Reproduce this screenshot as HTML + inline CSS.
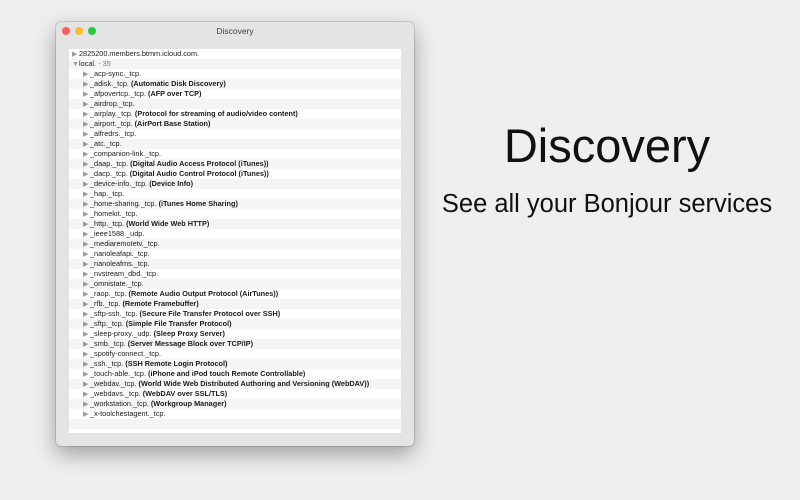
<!DOCTYPE html>
<html><head><meta charset="utf-8"><style>
body{margin:0;width:800px;height:500px;background:#efefef;position:relative;overflow:hidden;font-family:"Liberation Sans",sans-serif}
.win{position:absolute;left:56px;top:22px;width:358px;height:424px;background:#e4e4e4;border-radius:5px;box-shadow:0 8px 22px rgba(0,0,0,.35),0 0 0 1px rgba(0,0,0,.12)}
.tb{height:18px;text-align:center;font-size:8.5px;line-height:18px;color:#444}
.dot{position:absolute;top:5px;width:8px;height:8px;border-radius:50%}
.list{position:absolute;left:13px;top:27px;width:332px;height:384px;background:#fff;overflow:hidden}
.r{height:10px;line-height:10px;font-size:7.3px;color:#1a1a1a;white-space:nowrap}
.r:nth-child(even){background:#f5f5f5}
.r b{font-weight:bold}
.t{color:#999;font-size:7px;display:inline-block;width:7px}
.i1{padding-left:3px}.i2{padding-left:14px}
h1{position:absolute;left:440px;width:334px;top:118px;margin:0;text-align:center;font-weight:300;font-size:47px;color:#111}
h2{position:absolute;left:425px;width:364px;top:190px;margin:0;text-align:center;font-weight:normal;font-size:25.5px;color:#111}
</style></head><body>
<div class="win">
<div class="dot" style="left:6px;background:#fc5f57"></div>
<div class="dot" style="left:19px;background:#fdbc2e"></div>
<div class="dot" style="left:32px;background:#2ac940"></div>
<div class="tb">Discovery</div>
<div class="list">
<div class="r i1"><span class="t">▶</span>2825200.members.btmm.icloud.com.</div>
<div class="r i1"><span class="t">▼</span>local. <span style="color:#777">- 35</span></div>
<div class="r i2"><span class="t">▶</span>_acp-sync._tcp.</div>
<div class="r i2"><span class="t">▶</span>_adisk._tcp. <b>(Automatic Disk Discovery)</b></div>
<div class="r i2"><span class="t">▶</span>_afpovertcp._tcp. <b>(AFP over TCP)</b></div>
<div class="r i2"><span class="t">▶</span>_airdrop._tcp.</div>
<div class="r i2"><span class="t">▶</span>_airplay._tcp. <b>(Protocol for streaming of audio/video content)</b></div>
<div class="r i2"><span class="t">▶</span>_airport._tcp. <b>(AirPort Base Station)</b></div>
<div class="r i2"><span class="t">▶</span>_alfredrs._tcp.</div>
<div class="r i2"><span class="t">▶</span>_atc._tcp.</div>
<div class="r i2"><span class="t">▶</span>_companion-link._tcp.</div>
<div class="r i2"><span class="t">▶</span>_daap._tcp. <b>(Digital Audio Access Protocol (iTunes))</b></div>
<div class="r i2"><span class="t">▶</span>_dacp._tcp. <b>(Digital Audio Control Protocol (iTunes))</b></div>
<div class="r i2"><span class="t">▶</span>_device-info._tcp. <b>(Device Info)</b></div>
<div class="r i2"><span class="t">▶</span>_hap._tcp.</div>
<div class="r i2"><span class="t">▶</span>_home-sharing._tcp. <b>(iTunes Home Sharing)</b></div>
<div class="r i2"><span class="t">▶</span>_homekit._tcp.</div>
<div class="r i2"><span class="t">▶</span>_http._tcp. <b>(World Wide Web HTTP)</b></div>
<div class="r i2"><span class="t">▶</span>_ieee1588._udp.</div>
<div class="r i2"><span class="t">▶</span>_mediaremotetv._tcp.</div>
<div class="r i2"><span class="t">▶</span>_nanoleafapi._tcp.</div>
<div class="r i2"><span class="t">▶</span>_nanoleafms._tcp.</div>
<div class="r i2"><span class="t">▶</span>_nvstream_dbd._tcp.</div>
<div class="r i2"><span class="t">▶</span>_omnistate._tcp.</div>
<div class="r i2"><span class="t">▶</span>_raop._tcp. <b>(Remote Audio Output Protocol (AirTunes))</b></div>
<div class="r i2"><span class="t">▶</span>_rfb._tcp. <b>(Remote Framebuffer)</b></div>
<div class="r i2"><span class="t">▶</span>_sftp-ssh._tcp. <b>(Secure File Transfer Protocol over SSH)</b></div>
<div class="r i2"><span class="t">▶</span>_sftp._tcp. <b>(Simple File Transfer Protocol)</b></div>
<div class="r i2"><span class="t">▶</span>_sleep-proxy._udp. <b>(Sleep Proxy Server)</b></div>
<div class="r i2"><span class="t">▶</span>_smb._tcp. <b>(Server Message Block over TCP/IP)</b></div>
<div class="r i2"><span class="t">▶</span>_spotify-connect._tcp.</div>
<div class="r i2"><span class="t">▶</span>_ssh._tcp. <b>(SSH Remote Login Protocol)</b></div>
<div class="r i2"><span class="t">▶</span>_touch-able._tcp. <b>(iPhone and iPod touch Remote Controllable)</b></div>
<div class="r i2"><span class="t">▶</span>_webdav._tcp. <b>(World Wide Web Distributed Authoring and Versioning (WebDAV))</b></div>
<div class="r i2"><span class="t">▶</span>_webdavs._tcp. <b>(WebDAV over SSL/TLS)</b></div>
<div class="r i2"><span class="t">▶</span>_workstation._tcp. <b>(Workgroup Manager)</b></div>
<div class="r i2"><span class="t">▶</span>_x-toolchestagent._tcp.</div>
<div class="r"></div>
<div class="r"></div>
</div>
</div>
<h1>Discovery</h1>
<h2>See all your Bonjour services</h2>
</body></html>
